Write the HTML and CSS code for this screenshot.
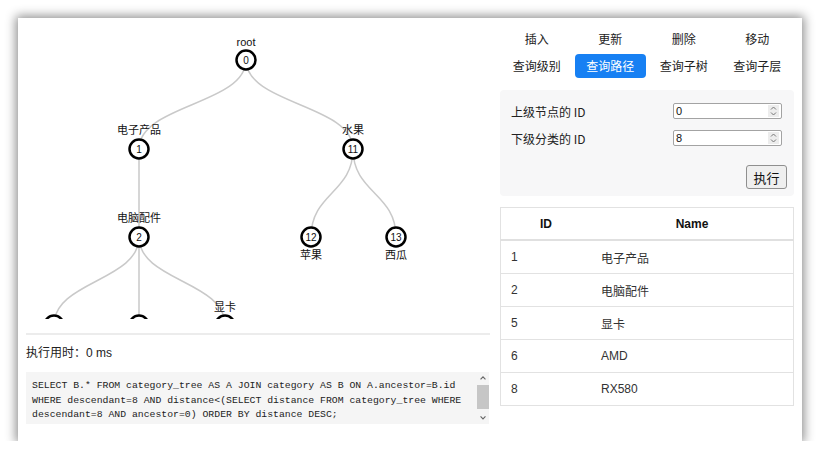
FILE: index.html
```html
<!DOCTYPE html>
<html lang="zh">
<head>
<meta charset="utf-8">
<title>Category Tree</title>
<link rel="stylesheet" href="styles.css">
</head>
<body>
<div class="window">
  <div class="left">
    <div class="tree">
      <svg width="472" height="301" viewBox="0 0 472 301" xmlns="http://www.w3.org/2000/svg">
        <g class="links">
          <path d="M228,42 C228,86.5 121,86.5 121,131"/>
          <path d="M228,42 C228,86.5 335,86.5 335,131"/>
          <path d="M121,131 L121,219"/>
          <path d="M335,131 C335,175 293,175 293,219"/>
          <path d="M335,131 C335,175 378,175 378,219"/>
          <path d="M121,219 C121,263 36,263 36,307"/>
          <path d="M121,219 L121,307"/>
          <path d="M121,219 C121,263 207,263 207,307"/>
        </g>
        <g class="nodes">
          <circle cx="228" cy="42" r="9.5"/>
          <circle cx="121" cy="131" r="9.5"/>
          <circle cx="335" cy="131" r="9.5"/>
          <circle cx="121" cy="219" r="9.5"/>
          <circle cx="293" cy="219" r="9.5"/>
          <circle cx="378" cy="219" r="9.5"/>
          <circle cx="36" cy="307" r="9.5"/>
          <circle cx="121" cy="307" r="9.5"/>
          <circle cx="207" cy="307" r="9.5"/>
        </g>
        <g class="ids">
          <text x="228" y="45.5">0</text>
          <text x="121" y="134.5">1</text>
          <text x="335" y="134.5">11</text>
          <text x="121" y="222.5">2</text>
          <text x="293" y="222.5">12</text>
          <text x="378" y="222.5">13</text>
        </g>
        <g class="labels">
          <text x="228" y="28">root</text>
          <text x="121" y="116">电子产品</text>
          <text x="335" y="116">水果</text>
          <text x="121" y="204">电脑配件</text>
          <text x="293" y="241">苹果</text>
          <text x="378" y="241">西瓜</text>
          <text x="207" y="293">显卡</text>
        </g>
      </svg>
    </div>
    <div class="divider"></div>
    <div class="timing">执行用时：0 ms</div>
    <div class="sql">
      <pre class="sql-text">SELECT B.* FROM category_tree AS A JOIN category AS B ON A.ancestor=B.id
WHERE descendant=8 AND distance&lt;(SELECT distance FROM category_tree WHERE
descendant=8 AND ancestor=0) ORDER BY distance DESC;</pre>
      <div class="scrollbar">
        <svg class="sb-arrow" width="12" height="12" viewBox="0 0 12 12"><path d="M3.5,7.5 L6,5 L8.5,7.5" /></svg>
        <div class="sb-thumb"></div>
        <svg class="sb-arrow" width="12" height="12" viewBox="0 0 12 12"><path d="M3.5,4.5 L6,7 L8.5,4.5" /></svg>
      </div>
    </div>
  </div>
  <div class="right">
    <div class="ops">
      <span class="op">插入</span>
      <span class="op">更新</span>
      <span class="op">删除</span>
      <span class="op">移动</span>
      <span class="op">查询级别</span>
      <span class="op active">查询路径</span>
      <span class="op">查询子树</span>
      <span class="op">查询子层</span>
    </div>
    <div class="form">
      <div class="field">
        <span class="field-label">上级节点的 ID</span>
        <div class="num-input"><span class="num-value">0</span><span class="spin"><svg width="9" height="12" viewBox="0 0 9 12"><path d="M2,4.5 L4.5,2 L7,4.5 M2,7.5 L4.5,10 L7,7.5"/></svg></span></div>
      </div>
      <div class="field">
        <span class="field-label">下级分类的 ID</span>
        <div class="num-input"><span class="num-value">8</span><span class="spin"><svg width="9" height="12" viewBox="0 0 9 12"><path d="M2,4.5 L4.5,2 L7,4.5 M2,7.5 L4.5,10 L7,7.5"/></svg></span></div>
      </div>
      <div class="actions"><button class="run">执行</button></div>
    </div>
    <table class="result">
      <thead>
        <tr><th class="col-id">ID</th><th>Name</th></tr>
      </thead>
      <tbody>
        <tr><td>1</td><td>电子产品</td></tr>
        <tr><td>2</td><td>电脑配件</td></tr>
        <tr><td>5</td><td>显卡</td></tr>
        <tr><td>6</td><td>AMD</td></tr>
        <tr><td>8</td><td>RX580</td></tr>
      </tbody>
    </table>
  </div>
</div>
</body>
</html>
```

FILE: styles.css
```css
html, body {
  margin: 0;
  padding: 0;
  background: #ffffff;
}

body {
  font-family: "Liberation Sans", "Noto Sans CJK SC", sans-serif;
  color: #222;
}

.window {
  margin: 18px 0 0 18px;
  width: 784px;
  height: 423px;
  background: #fff;
  box-shadow: 0 0 10px 2px rgba(0, 0, 0, 0.45);
  display: flex;
  box-sizing: border-box;
}

.left {
  width: 472px;
  display: flex;
  flex-direction: column;
}

.tree {
  height: 301px;
  overflow: hidden;
}

.tree svg {
  display: block;
}

.links path {
  fill: none;
  stroke: #c9c9c9;
  stroke-width: 1.5;
}

.nodes circle {
  fill: #fff;
  stroke: #000;
  stroke-width: 2.5;
}

.ids text {
  font-family: "Liberation Sans", sans-serif;
  font-size: 10px;
  text-anchor: middle;
  fill: #111;
}

.labels text {
  font-family: "Liberation Sans", "Noto Sans CJK SC", sans-serif;
  font-size: 11px;
  text-anchor: middle;
  fill: #111;
}

.divider {
  margin: 14px 0 0 8px;
  height: 2px;
  background: #ececec;
}

.timing {
  margin: 10px 0 0 8px;
  font-size: 12px;
  line-height: 16px;
  color: #222;
}

.sql {
  margin: 11px 0 0 8px;
  width: 463px;
  height: 52px;
  background: #f5f5f5;
  display: flex;
}

.sql-text {
  flex: 1;
  margin: 0;
  padding: 7px 0 0 6px;
  font-family: "Liberation Mono", monospace;
  font-size: 9.8px;
  line-height: 14.5px;
  color: #222;
  white-space: pre;
  overflow: hidden;
}

.scrollbar {
  width: 12px;
  display: flex;
  flex-direction: column;
  align-items: center;
}

.sb-arrow {
  display: block;
}

.sb-arrow path {
  fill: none;
  stroke: #666;
  stroke-width: 1.2;
}

.sb-thumb {
  width: 12px;
  height: 25px;
  margin: 1px 0 3px;
  background: #c6c6c6;
}

.right {
  width: 294px;
  margin-left: 10px;
  display: flex;
  flex-direction: column;
}

.ops {
  margin-top: 9px;
  display: grid;
  grid-template-columns: repeat(4, 1fr);
  row-gap: 3px;
}

.op {
  justify-self: center;
  width: 71px;
  height: 24px;
  line-height: 24px;
  text-align: center;
  font-family: "Noto Sans CJK SC", sans-serif;
  font-size: 12px;
  color: #222;
  border-radius: 4px;
}

.op.active {
  background: #1780f3;
  color: #fff;
}

.form {
  margin-top: 12px;
  background: #f7f7f8;
  border-radius: 4px;
  padding: 13px 12px 7px 11px;
  display: flex;
  flex-direction: column;
  gap: 11px;
}

.field {
  display: flex;
  justify-content: space-between;
  align-items: center;
  height: 16px;
}

.field-label {
  font-family: "Noto Sans CJK SC", sans-serif;
  font-size: 12px;
  color: #222;
}

.num-input {
  width: 109px;
  height: 16px;
  box-sizing: border-box;
  border: 1px solid #a3a3a3;
  border-radius: 2px;
  background: #fff;
  display: flex;
  align-items: center;
}

.num-value {
  flex: 1;
  padding-left: 2px;
  font-size: 11px;
  color: #111;
}

.spin {
  width: 11px;
  height: 12px;
  margin-right: 2px;
  background: #ededed;
  display: flex;
  justify-content: center;
}

.spin path {
  fill: none;
  stroke: #777;
  stroke-width: 1;
}

.actions {
  display: flex;
  justify-content: flex-end;
  margin: 8px -5px 0 0;
}

.run {
  width: 41px;
  height: 24px;
  padding: 0;
  font-family: "Noto Sans CJK SC", sans-serif;
  font-size: 13px;
  color: #111;
  background: #efefef;
  border: 1px solid #8f8f8f;
  border-radius: 3px;
}

.result {
  margin-top: 11px;
  width: 294px;
  border-collapse: collapse;
  border: 1px solid #e2e2e2;
  font-size: 12px;
}

.result th {
  height: 31px;
  font-weight: bold;
  color: #111;
  text-align: center;
  border-bottom: 2px solid #e0e0e0;
  padding: 0;
}

.result .col-id {
  width: 90px;
}

.result td {
  height: 32px;
  padding: 0 0 0 10px;
  color: #333;
  border-top: 1px solid #e2e2e2;
  font-family: "Liberation Sans", "Noto Sans CJK SC", sans-serif;
}
```
